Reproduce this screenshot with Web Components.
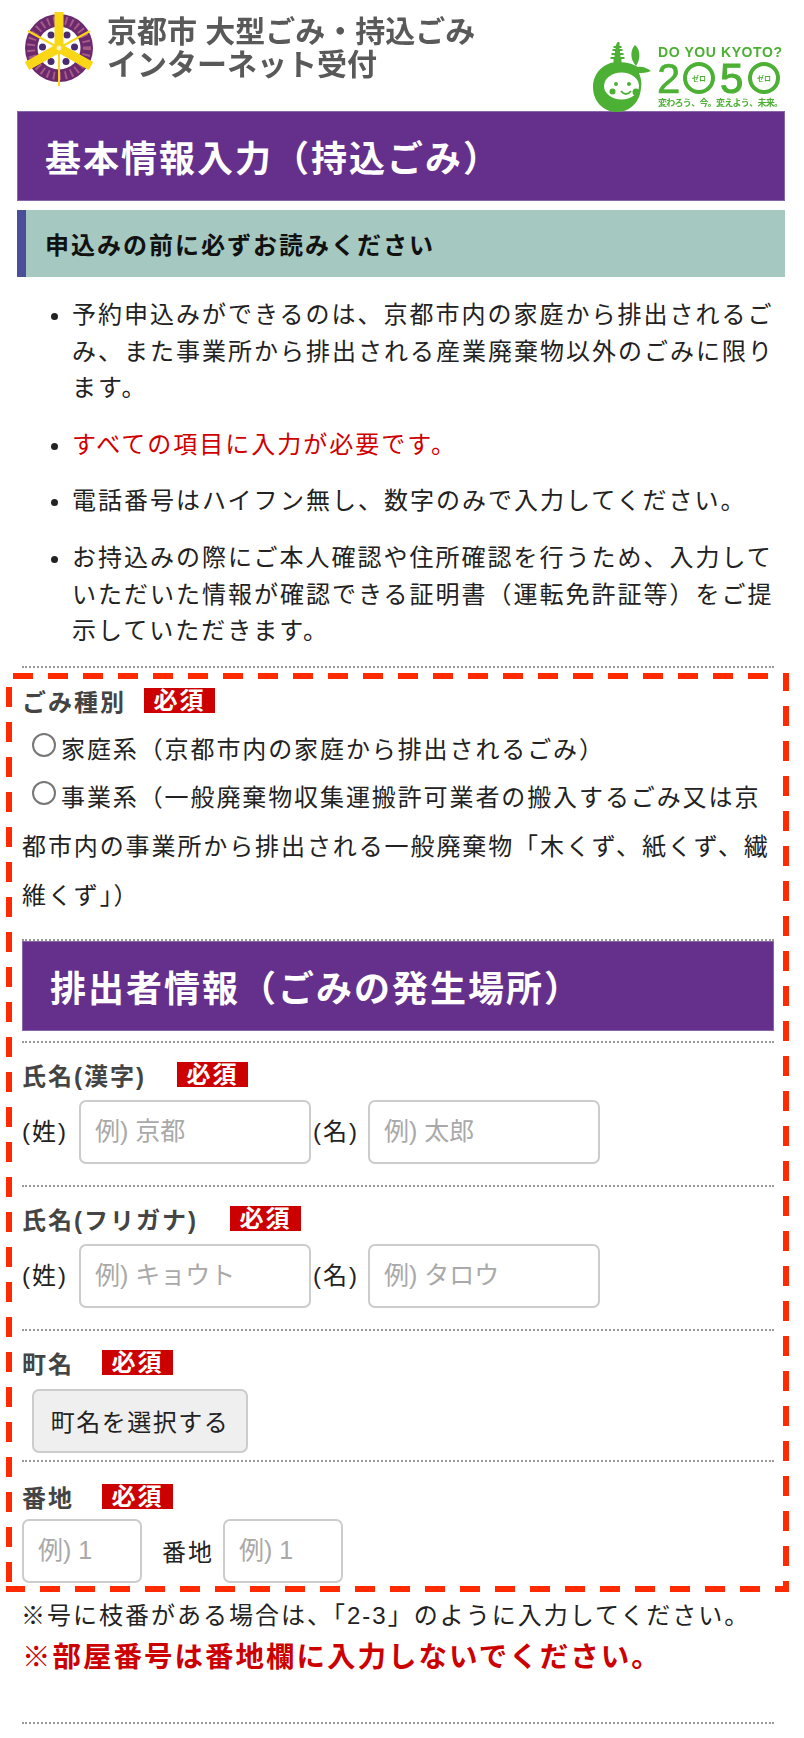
<!DOCTYPE html>
<html lang="ja">
<head>
<meta charset="UTF-8">
<title>基本情報入力（持込ごみ）</title>
<style>
  body {
    margin: 0;
    background: #fff;
    color: #222;
    font-family: "Liberation Sans", "Noto Sans CJK JP", sans-serif;
    font-size: 24px;
    letter-spacing: 2px;
  }
  main { display: block; padding: 0 19px 0 17px; }
  .note { padding: 3px 0 0 4px; line-height: 42px; }
  .warn { padding-left: 5px; font-size: 28.5px; font-weight: 700; color: #c00; line-height: 40px; }
  .sei { width: 57px; padding-bottom: 4px; }
  .mei { width: 55px; padding: 0 0 4px 2px; }
</style>
</head>
<body>
<template id="site-header">
  <style>
    :host { display: flex; justify-content: space-between; height: 111px; padding-left: 7px; }
    .brand { display: flex; gap: 11px; padding-top: 12px; }
    .name { font-size: 30px; font-weight: 700; line-height: 33px; color: #595959; letter-spacing: 0; padding-top: 3px; filter: blur(0.5px); }
    svg { display: block; overflow: visible; }
    .emblem { filter: blur(0.6px); }
    .zero { margin-top: 42px; filter: blur(0.3px); }
  </style>
  <div class="brand">
    <svg class="emblem" width="72" height="72" viewBox="0 0 72 72">
      <ellipse cx="35" cy="36" rx="34" ry="34" fill="#6b2a6e"/>
      <circle cx="35" cy="36" r="28" fill="none" stroke="#a65a86" stroke-width="8" stroke-dasharray="2 4"/>
      <circle cx="35" cy="36" r="21.500" fill="#fff"/>
      <g fill="#4a2a70">
        <circle cx="27" cy="23" r="3.500"/><circle cx="43" cy="23" r="3.500"/>
        <circle cx="18.500" cy="35" r="3.500"/><circle cx="50.500" cy="35" r="3.500"/>
        <circle cx="27" cy="49.500" r="3.500"/><circle cx="42" cy="49.500" r="3.500"/>
      </g>
      <path d="M4 19 35 36 66 19M35 36V74" fill="none" stroke="#f9d616" stroke-width="2"/>
      <path d="M35 0V36M35 36 3 54M35 36 67 54" fill="none" stroke="#f9d616" stroke-width="9"/>
      <circle cx="35" cy="36" r="2.500" fill="#fdf1b8"/>
    </svg>
    <div class="name">京都市 大型ごみ・持込ごみ<br>インターネット受付</div>
  </div>
  <svg class="zero" width="196" height="69" viewBox="0 0 196 69">
    <g fill="#4cb034">
      <!-- pagoda -->
      <path d="M28.500 0h2v4h2v2h-2v1h3v2h-2.500v2h3.500v2h-3v2h4v2h-3v5h-8v-5h-3v-2h4v-2h-3v-2h3.500v-2h-2.500v-2h3v-1h-2v-2h2z"/>
      <path d="M46 3c4 3 7 12 1 21c-7-8-5-17-1-21z"/>
      <path d="M4 45C4 31 15 20 29 20C39 20 46 23 49 25C53 24 58 26 62 29C57 31 53 31 50 31C52 36 53 41 52 46C51 60 41 70 28 70C14 70 4 59 4 45z"/>
    </g>
    <ellipse cx="32.500" cy="44" rx="17.500" ry="13.500" fill="#fff"/>
    <g fill="#4cb034">
      <circle cx="27" cy="42" r="2"/><circle cx="40" cy="42" r="2"/>
      <circle cx="23.500" cy="49.500" r="3"/><circle cx="47" cy="50" r="3.500"/>
    </g>
    <path d="M32 49c3 4 7 4 10 0" fill="none" stroke="#4cb034" stroke-width="1.800"/>
    <g font-family="'Liberation Sans','Noto Sans CJK JP',sans-serif" fill="#4cb034" letter-spacing="0">
      <text x="69" y="15" font-size="14" font-weight="700" textLength="124">DO YOU KYOTO?</text>
      <text x="68" y="51" font-size="42" stroke="#4cb034" stroke-width="0.6">2</text>
      <text x="131" y="51" font-size="42" stroke="#4cb034" stroke-width="1">5</text>
      <text x="69" y="64" font-size="9" font-weight="700" textLength="125">変わろう、今。変えよう、未来。</text>
    </g>
    <g fill="none" stroke="#4cb034" stroke-width="4">
      <circle cx="110" cy="36" r="14"/><circle cx="175" cy="36" r="14"/>
    </g>
    <g font-family="'Noto Sans CJK JP',sans-serif" fill="#4cb034" font-size="7" font-weight="700" text-anchor="middle" letter-spacing="0">
      <text x="110" y="39">ゼロ</text><text x="175" y="39">ゼロ</text>
    </g>
  </svg>
</template>

<template id="page-title">
  <style>
    :host { display: flex; align-items: center; height: 88px; padding-left: 27px; background: #65308c; border: 1px solid #8a66a8; color: #fff; font-size: 36px; font-weight: 700; letter-spacing: 2px; }
  </style>
  <slot></slot>
</template>

<template id="notice-title">
  <style>
    :host { display: flex; align-items: center; height: 67px; margin-top: 9px; padding-left: 19px; background: #a5c8c0; border-left: 9px solid #4a4f9c; color: #111; font-size: 24px; font-weight: 700; }
  </style>
  <slot></slot>
</template>

<template id="notice-list">
  <style>
    :host { display: block; }
    ul { margin: 20px 0 0; padding: 0 0 0 55px; line-height: 36.6px; }
    ::slotted(li) { margin-bottom: 20px; }
    ::slotted(li:last-child) { margin-bottom: 16px; }
  </style>
  <ul><slot></slot></ul>
</template>

<template id="dotted-rule">
  <style>
    :host { display: block; height: 0; border-top: 2px dotted #999; }
  </style>
</template>

<template id="dashed-area">
  <style>
    /* dash pitch in the reference is wider than border: dashed gives, so paint the edges */
    :host {
      display: block;
      padding: 13px 15px 9px 16px;
      margin: 5px -4px 0 -11px;
      background:
        linear-gradient(90deg, #ff2a00 0 20px, transparent 0) 7px 0 / 35px 6px repeat-x,
        linear-gradient(90deg, #ff2a00 0 20px, transparent 0) -1px 100% / 35px 6px repeat-x,
        linear-gradient(#ff2a00 0 20px, transparent 0) 0 14px / 6px 35px repeat-y,
        linear-gradient(#ff2a00 0 20px, transparent 0) 100% -2px / 6px 35px repeat-y;
    }
  </style>
  <slot></slot>
</template>

<template id="required-mark">
  <style>
    :host { display: block; width: 71px; height: 25px; line-height: 25px; background: #c00; color: #fff; font-size: 24px; font-weight: 700; text-align: center; color: #fff; }
  </style>
  必須
</template>

<template id="field-label">
  <style>
    :host { display: flex; align-items: center; height: 30px; font-size: 24px; font-weight: 700; color: #444; }
    required-mark { margin-left: var(--gap, 28px); }
  </style>
  <slot></slot><required-mark></required-mark>
</template>

<template id="input-row">
  <style>
    :host { display: flex; align-items: center; }
  </style>
  <slot></slot>
</template>

<template id="text-box">
  <style>
    :host { display: block; }
    input { display: block; box-sizing: border-box; width: var(--w, 232px); height: 64px; padding: 0 14px; border: 2px solid #ccc; border-radius: 7px; background: #fff; font: inherit; font-size: 25px; letter-spacing: 0; outline: none; }
    input::placeholder { color: #a9a9a9; opacity: 1; }
  </style>
  <input type="text">
</template>

<template id="radio-option">
  <style>
    :host { display: inline; }
    span { display: inline-block; box-sizing: border-box; width: 24px; height: 24px; margin: 0 5px 0 10px; border: 2px solid #777; border-radius: 50%; vertical-align: 1px; background: #fff; }
  </style>
  <span></span><slot></slot>
</template>

<template id="select-button">
  <style>
    :host { display: block; }
    button { display: block; box-sizing: border-box; width: 216px; height: 64px; margin-left: 10px; border: 2px solid #ccc; border-radius: 7px; background: #efefef; color: #222; font: inherit; letter-spacing: 1.5px; }
  </style>
  <button><slot></slot></button>
</template>

<script>
  class PlainElement extends HTMLElement {
    constructor() {
      super();
      const tpl = document.getElementById(this.constructor.templateId);
      this.attachShadow({ mode: "open" }).appendChild(tpl.content.cloneNode(true));
    }
  }

  function register(tag) {
    customElements.define(tag, class extends PlainElement {
      static get templateId() { return tag; }
    });
  }

  ["site-header", "page-title", "notice-title", "notice-list", "dotted-rule", "dashed-area", "required-mark", "field-label", "input-row", "radio-option", "select-button"].forEach(register);

  class TextBox extends PlainElement {
    static get templateId() { return "text-box"; }
    connectedCallback() {
      this.shadowRoot.querySelector("input").placeholder = this.getAttribute("placeholder") || "";
    }
  }
  customElements.define("text-box", TextBox);
</script>

<main>
  <site-header></site-header>
  <page-title>基本情報入力（持込ごみ）</page-title>
  <notice-title>申込みの前に必ずお読みください</notice-title>
  <notice-list>
    <li>予約申込みができるのは、京都市内の家庭から排出されるごみ、また事業所から排出される産業廃棄物以外のごみに限ります。</li>
    <li><span style="color:#d00000">すべての項目に入力が必要です。</span></li>
    <li>電話番号はハイフン無し、数字のみで入力してください。</li>
    <li>お持込みの際にご本人確認や住所確認を行うため、入力していただいた情報が確認できる証明書（運転免許証等）をご提示していただきます。</li>
  </notice-list>
  <dotted-rule style="margin:0 11px 0 5px"></dotted-rule>
  <dashed-area>
    <field-label style="--gap:18px">ごみ種別</field-label>
    <div style="line-height:48.7px;letter-spacing:1.9px;padding:10px 0 18px">
      <radio-option>家庭系（京都市内の家庭から排出されるごみ）</radio-option><br>
      <radio-option>事業系（一般廃棄物収集運搬許可業者の搬入するごみ又は京都市内の事業所から排出される一般廃棄物「木くず、紙くず、繊維くず」）</radio-option>
    </div>
    <dotted-rule></dotted-rule>
    <page-title>排出者情報（ごみの発生場所）</page-title>
    <dotted-rule style="margin-top:10px"></dotted-rule>

    <field-label style="--gap:31px;margin-top:17px">氏名(漢字)</field-label>
    <input-row style="margin:10px 0 21px">
      <span class="sei">(姓)</span><text-box placeholder="例) 京都"></text-box>
      <span class="mei">(名)</span><text-box placeholder="例) 太郎"></text-box>
    </input-row>
    <dotted-rule></dotted-rule>

    <field-label style="--gap:32px;margin-top:17px">氏名(フリガナ)</field-label>
    <input-row style="margin:10px 0 21px">
      <span class="sei">(姓)</span><text-box placeholder="例) キョウト"></text-box>
      <span class="mei">(名)</span><text-box placeholder="例) タロウ"></text-box>
    </input-row>
    <dotted-rule></dotted-rule>

    <field-label style="margin-top:17px">町名</field-label>
    <select-button style="margin:11px 0 7px">町名を選択する</select-button>
    <dotted-rule></dotted-rule>

    <field-label style="margin-top:20px">番地</field-label>
    <input-row style="margin-top:7px">
      <text-box placeholder="例) 1" style="--w:120px"></text-box>
      <span style="padding:0 9px 0 20px">番地</span>
      <text-box placeholder="例) 1" style="--w:120px"></text-box>
    </input-row>
  </dashed-area>
  <div class="note">※号に枝番がある場合は、「2-3」のように入力してください。</div>
  <div class="warn">※部屋番号は番地欄に入力しないでください。</div>
  <dotted-rule style="margin:45px 11px 0 5px"></dotted-rule>
</main>
</body>
</html>
